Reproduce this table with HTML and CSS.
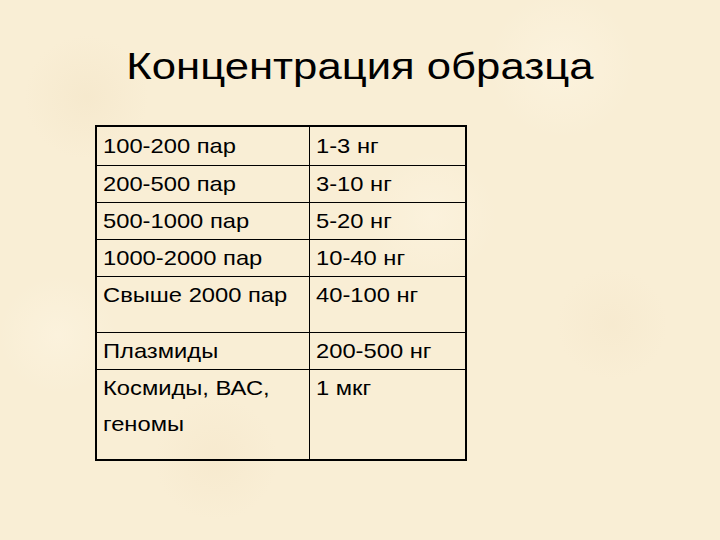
FILE: index.html
```html
<!DOCTYPE html>
<html lang="ru">
<head>
<meta charset="utf-8">
<title>Концентрация образца</title>
<link rel="stylesheet" href="styles.css">
</head>
<body>
<main class="slide">
  <h1 class="title"><span class="wide-title">Концентрация образца</span></h1>
  <div class="grid">
    <div class="cell c1 first"><span class="t">100-200 пар</span></div>
    <div class="cell c2 first"><span class="t">1-3 нг</span></div>

    <div class="cell c1"><span class="t">200-500 пар</span></div>
    <div class="cell c2"><span class="t">3-10 нг</span></div>

    <div class="cell c1"><span class="t">500-1000 пар</span></div>
    <div class="cell c2"><span class="t">5-20 нг</span></div>

    <div class="cell c1"><span class="t">1000-2000 пар</span></div>
    <div class="cell c2"><span class="t">10-40 нг</span></div>

    <div class="cell c1 tall"><span class="t">Свыше 2000 пар</span></div>
    <div class="cell c2 tall"><span class="t">40-100 нг</span></div>

    <div class="cell c1"><span class="t">Плазмиды</span></div>
    <div class="cell c2"><span class="t">200-500 нг</span></div>

    <div class="cell c1 last"><span class="t">Космиды, ВАС,<br>геномы</span></div>
    <div class="cell c2 last"><span class="t">1 мкг</span></div>
  </div>
</main>
</body>
</html>
```
FILE: styles.css
```css
html, body {
  margin: 0;
  padding: 0;
}

body {
  width: 720px;
  height: 540px;
  overflow: hidden;
  font-family: "Liberation Sans", Arial, sans-serif;
  color: #000;
  background-color: #f9eed5;
  background-image:
    radial-gradient(circle at 12% 18%, rgba(240, 224, 192, 0.35) 0, rgba(240, 224, 192, 0) 8%),
    radial-gradient(circle at 78% 12%, rgba(255, 249, 234, 0.4) 0, rgba(255, 249, 234, 0) 10%),
    radial-gradient(circle at 85% 60%, rgba(242, 226, 196, 0.3) 0, rgba(242, 226, 196, 0) 8%),
    radial-gradient(circle at 30% 85%, rgba(241, 224, 192, 0.3) 0, rgba(241, 224, 192, 0) 9%),
    radial-gradient(circle at 60% 40%, rgba(255, 249, 234, 0.35) 0, rgba(255, 249, 234, 0) 12%),
    radial-gradient(circle at 8% 62%, rgba(255, 249, 234, 0.35) 0, rgba(255, 249, 234, 0) 8%);
}

.slide {
  display: flex;
  flex-direction: column;
}

.title {
  margin: 46px 0 0 0;
  font-size: 37px;
  font-weight: normal;
  line-height: 42px;
  height: 42px;
  text-align: center;
}

.wide-title {
  display: inline-block;
  transform: scaleX(1.18);
  transform-origin: center;
  white-space: nowrap;
}

.grid {
  margin: 37px 0 0 95px;
  width: 368px;
  border: 2px solid #000;
  display: grid;
  grid-template-columns: 213px 155px;
}

.cell {
  font-size: 21px;
  line-height: 36px;
  padding: 0 0 0 6px;
  border-top: 1px solid #000;
  white-space: nowrap;
}

.c1 {
  border-right: 1px solid #000;
}

.first {
  border-top: none;
  padding-top: 1px;
  padding-bottom: 1px;
}

.tall {
  padding-bottom: 19px;
}

.last {
  padding-bottom: 17px;
  min-height: 72px;
}

.t {
  display: inline-block;
  transform: scaleX(1.13);
  transform-origin: left top;
}
```
